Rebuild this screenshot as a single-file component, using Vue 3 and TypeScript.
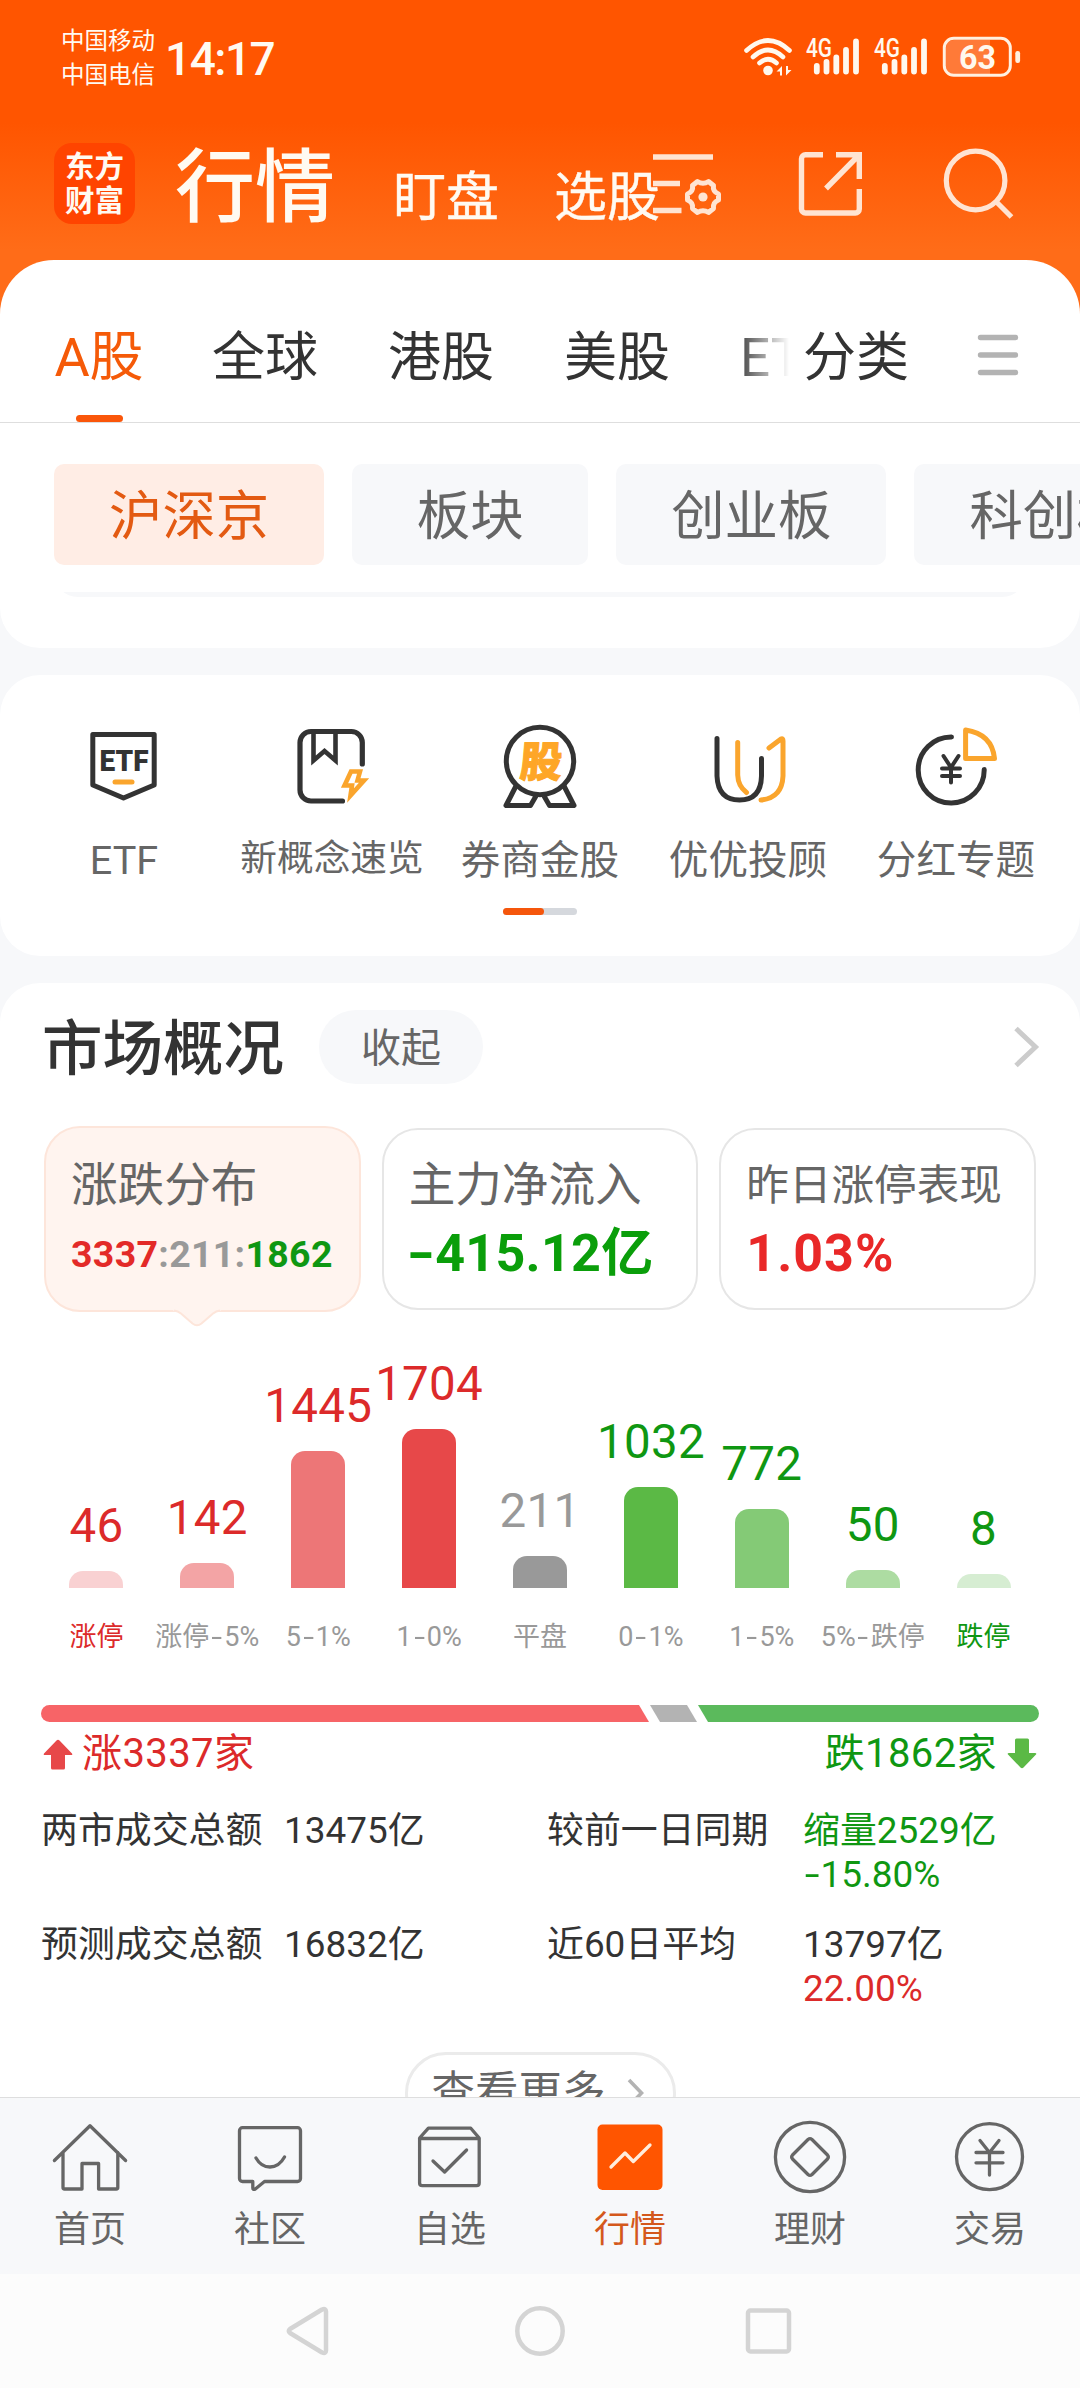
<script setup lang="ts">
interface Tab { label: string; active?: boolean }
interface Bar { value: number; label: string; height: number; bar: string; tone: string; labelTone: string }

const marketTabs: Tab[] = [
  { label: 'A股', active: true },
  { label: '全球' },
  { label: '港股' },
  { label: '美股' },
  { label: 'ETF' },
]

const chips: Tab[] = [
  { label: '沪深京', active: true },
  { label: '板块' },
  { label: '创业板' },
  { label: '科创板' },
]

const bars: Bar[] = [
  { value: 46, label: '涨停', height: 17, bar: '#f9d1d2', tone: 'up', labelTone: 'up' },
  { value: 142, label: '涨停-5%', height: 25.5, bar: '#f3a4a5', tone: 'up', labelTone: 'flat' },
  { value: 1445, label: '5-1%', height: 137, bar: '#ed7677', tone: 'up', labelTone: 'flat' },
  { value: 1704, label: '1-0%', height: 159, bar: '#e74849', tone: 'up', labelTone: 'flat' },
  { value: 211, label: '平盘', height: 32, bar: '#999999', tone: 'flat', labelTone: 'flat' },
  { value: 1032, label: '0-1%', height: 101.5, bar: '#5bb945', tone: 'down', labelTone: 'flat' },
  { value: 772, label: '1-5%', height: 79.5, bar: '#84ca76', tone: 'down', labelTone: 'flat' },
  { value: 50, label: '5%-跌停', height: 18, bar: '#addca2', tone: 'down', labelTone: 'flat' },
  { value: 8, label: '跌停', height: 14.5, bar: '#d6edd2', tone: 'down', labelTone: 'down' },
]
</script>

<template>
  <div class="screen">
    <header class="top">
      <div class="status">
        <div class="carriers"><span>中国移动</span><span>中国电信</span></div>
        <div class="clock">14:17</div>
        <svg class="wifi" width="50" height="40" viewBox="0 0 50 40" fill="none" stroke="#fff8ee" stroke-linecap="round">
          <path d="M3.500 13.500Q25 -6.500 46.500 13.500" stroke-width="4.600" />
          <path d="M10 20Q25 6 40 20" stroke-width="4.600" />
          <path d="M16.500 26Q25 18.500 33.500 26" stroke-width="4.600" />
          <circle cx="25" cy="33.500" r="4.800" fill="#fff8ee" stroke="none" />
          <path d="M33.500 34.500l5.500-5.500v9.500h-2v-4zM48.500 33l-5.500 5.500v-9.500h2v4z" fill="#fff8ee" stroke="none" />
        </svg>
        <svg v-for="n in 2" :key="n" class="signal" width="54" height="40" viewBox="0 0 54 40">
          <text x="0" y="20" font-size="25" font-weight="500" textLength="26" lengthAdjust="spacingAndGlyphs" fill="#fff8ee">4G</text>
          <g stroke="#fff8ee" stroke-width="5.800" stroke-linecap="round">
            <path d="M10.800 29v5.500M20.500 25v9.500M30.300 20.500v14M40 13v21.500M50 4.500v30" />
          </g>
        </svg>
        <svg class="battery" width="80" height="42" viewBox="0 0 80 42">
          <path d="M12 4H48V38H12a8 8 0 0 1-8-8V12a8 8 0 0 1 8-8z" fill="#fff" opacity=".22" />
          <rect x="2.300" y="2.300" width="66" height="37" rx="9.500" fill="none" stroke="#fff0e0" stroke-width="3" />
          <rect x="73.300" y="15" width="4.800" height="12" rx="2.200" fill="#fff0e0" />
          <text x="35.500" y="33" font-size="34" font-weight="700" text-anchor="middle" fill="#fff8ee" textLength="37" lengthAdjust="spacingAndGlyphs">63</text>
        </svg>
      </div>
      <div class="titlebar">
        <div class="logo"><span>东方</span><span>财富</span></div>
        <span class="t-main">行情</span>
        <span class="t-sub">盯盘</span>
        <span class="t-sub second">选股</span>
        <svg class="i-list" width="64" height="76" viewBox="0 0 64 76" fill="none" stroke="#ffe4d2" stroke-width="5.400">
          <path d="M0 15h60M0 41.500h27M0 68.500h28.500" />
          <path stroke-linejoin="round" stroke-width="5" d="M44.500 39.500Q50 43 55.500 39.500L60.500 43.500Q59.500 49.500 65.500 52V58Q59.500 60.500 60.500 66.500L55.500 70.500Q50 67 44.500 70.500L39.500 66.500Q40.500 60.500 34.500 58V52Q40.500 49.500 39.500 43.500Z" />
          <circle cx="50" cy="55" r="4.600" fill="#ffe4d2" stroke="none" />
        </svg>
        <svg class="i-share" width="68" height="68" viewBox="0 0 68 68" fill="none" stroke="#ffe4d2" stroke-width="5.400">
          <path d="M26 4.700H8.500a4 4 0 0 0-4 4V59a4 4 0 0 0 4 4H58.300a4 4 0 0 0 4-4V39" />
          <path d="M39 4.700H62.300V29M62 5L29 38.500" />
        </svg>
        <svg class="i-search" width="74" height="74" viewBox="0 0 74 74" fill="none" stroke="#ffe4d2" stroke-width="5.200">
          <circle cx="34.600" cy="34.500" r="29.300" /><path d="M55 55.500L70.500 71" />
        </svg>
      </div>
    </header>

    <section class="card markets">
      <nav class="tabs">
        <div class="tab-scroll">
          <div v-for="t in marketTabs" :key="t.label" class="tab" :class="{ on: t.active }">
            <span>{{ t.label }}</span><i></i>
          </div>
        </div>
        <div class="tab sort"><span>分类</span></div>
        <svg class="burger" width="42" height="42" viewBox="0 0 42 42" stroke="#b3b3b3" stroke-width="5.400" stroke-linecap="round">
          <path d="M3.500 3.500h35M3.500 21h35M3.500 38.500h35" />
        </svg>
      </nav>
      <div class="chips">
        <span v-for="c in chips" :key="c.label" class="chip" :class="{ on: c.active }">{{ c.label }}</span>
      </div>
      <div class="peek"><div></div></div>
    </section>

    <section class="card tools">
      <div class="tool-row">
        <div class="tool">
          <svg viewBox="0 0 96 96" fill="none" stroke="#333" stroke-width="5" stroke-linejoin="round" stroke-linecap="round">
            <path d="M16.800 18.500H78.200V69L47.500 82L16.800 69Z" />
            <text x="23.500" y="54.500" font-size="30" font-weight="900" fill="#333" stroke="none" textLength="49" lengthAdjust="spacingAndGlyphs">ETF</text>
            <path d="M39 66H56" stroke="#faa52d" />
          </svg>
          <span>ETF</span>
        </div>
        <div class="tool">
          <svg viewBox="0 0 96 96" fill="none" stroke="#333" stroke-width="5.200" stroke-linecap="round">
            <path d="M78.300 48V26.500a11 11 0 0 0-11-11H27a11 11 0 0 0-11 11V74a11 11 0 0 0 11 11H58.500" />
            <path d="M29.500 17V44.500L40.500 35L51.500 44.500V17" stroke-width="4.600" />
            <path d="M67 55.500H76L73.500 64.500H80L66.500 79.500L68 69.500H60.500Z" stroke="#faa52d" stroke-width="4.600" stroke-linecap="butt" />
          </svg>
          <span class="small">新概念速览</span>
        </div>
        <div class="tool">
          <svg viewBox="0 0 96 96" fill="none" stroke="#333" stroke-width="5" stroke-linejoin="round">
            <circle cx="48" cy="45" r="33.700" />
            <path d="M24 70L14 89.500H38.500L44 80M72 70L82 89.500H57.500L52 80" />
            <text x="0" y="0" transform="translate(48 60.500) skewX(-5)" text-anchor="middle" font-size="42" font-weight="900" fill="#fea627" stroke="#fea627" stroke-width="1">股</text>
          </svg>
          <span>券商金股</span>
        </div>
        <div class="tool">
          <svg viewBox="0 0 96 96" fill="none" stroke="#333" stroke-width="5" stroke-linecap="round" stroke-linejoin="round">
            <path d="M37.700 26.500V59Q38 70 46.500 76.500" stroke="#faa52d" />
            <path d="M69 32L81 23Q83 22 83 25V60Q82 82 61 84" stroke="#faa52d" />
            <path d="M17 22.500V60Q18 84 39.500 84Q61 84 61.500 60V42.500" />
          </svg>
          <span>优优投顾</span>
        </div>
        <div class="tool">
          <svg viewBox="0 0 96 96" fill="none" stroke="#333" stroke-width="5" stroke-linecap="round" stroke-linejoin="round">
            <path d="M43.500 21A33 33 0 1 0 76.200 53.500" />
            <path d="M35.500 40L43 51.500L50.500 40M43 51.500V66.500M34 52.500H52M34 60H52" stroke-width="4" />
            <path d="M57.600 14V42.500H86.500Q84 18 57.600 14Z" stroke="#faa52d" />
          </svg>
          <span>分红专题</span>
        </div>
      </div>
      <div class="pager"><i></i></div>
    </section>

    <section class="card overview">
      <div class="ov-head">
        <h2>市场概况</h2>
        <span class="fold">收起</span>
        <svg width="28" height="44" viewBox="0 0 28 44" fill="none" stroke="#ccc" stroke-width="5"><path d="M3 3.500L22.500 22L3 40.500" /></svg>
      </div>

      <div class="stats">
        <div class="stat on">
          <span class="s-name">涨跌分布</span>
          <span class="s-val ratio"><b class="up">3337</b><b class="flat">:211:</b><b class="down">1862</b></span>
          <svg class="pointer" width="48" height="20" viewBox="0 0 48 20"><path d="M0 0H48V1.500Q43 2 40 4.500L28.500 14.500Q24 18 19.500 14.500L8 4.500Q5 2 0 1.500Z" fill="#fff4ef" /><path d="M1 1.500Q5 2 8 4.500L19.500 14.500Q24 18 28.500 14.500L40 4.500Q43 2 47 1.500" fill="none" stroke="#fde5da" stroke-width="2" /></svg>
        </div>
        <div class="stat">
          <span class="s-name">主力净流入</span>
          <span class="s-val down"><i class="minus">-</i>415.12亿</span>
        </div>
        <div class="stat">
          <span class="s-name tight">昨日涨停表现</span>
          <span class="s-val up">1.03%</span>
        </div>
      </div>

      <div class="chart">
        <div v-for="b in bars" :key="b.label" class="col">
          <span class="num" :class="b.tone">{{ b.value }}</span>
          <div class="bar" :style="{ height: b.height + 'px', background: b.bar }"></div>
          <span class="lab" :class="b.labelTone"><template v-for="(part, k) in b.label.split('-')" :key="k"><i v-if="k" class="minus">-</i>{{ part }}</template></span>
        </div>
      </div>

      <div class="balance"><i class="b-up"></i><i class="b-flat"></i><i class="b-down"></i></div>
      <div class="legend">
        <svg width="30" height="31" viewBox="0 0 30 31"><path d="M13.500 1.500Q15 0 16.500 1.500L29 14.500Q30 16 28 16H22V29Q22 30.500 20.500 30.500H9.500Q8 30.500 8 29V16H2Q0 16 1 14.500Z" fill="#e74849" /></svg>
        <span class="up">涨3337家</span>
        <span class="down right">跌1862家</span>
        <svg class="dn" width="30" height="31" viewBox="0 0 30 31"><path d="M13.500 29.500Q15 31 16.500 29.500L29 16.500Q30 15 28 15H22V2Q22 .5 20.500 .5H9.500Q8 .5 8 2V15H2Q0 15 1 16.500Z" fill="#5bb945" /></svg>
      </div>

      <div class="totals">
        <span>两市成交总额</span><span>13475亿</span><span>较前一日同期</span>
        <span class="down">缩量2529亿<br /><i class="minus">-</i>15.80%</span>
        <span>预测成交总额</span><span>16832亿</span><span>近60日平均</span>
        <span>13797亿<br /><em class="up">22.00%</em></span>
      </div>

      <div class="more">
        <span>查看更多</span>
        <svg width="18" height="30" viewBox="0 0 18 30" fill="none" stroke="#b3b3b3" stroke-width="3.600"><path d="M2 2L14.500 15L2 28" /></svg>
      </div>
    </section>

    <nav class="tabbar">
      <div class="item">
        <svg viewBox="0 0 80 80"><path d="M4.400 43.500L40 8.800L75.600 43.500M13 35.500V70.500Q13 72 14.500 72H32V46.500H48.600V72H66.300Q67.800 72 67.800 70.500V35.500" /></svg>
        <span>首页</span>
      </div>
      <div class="item">
        <svg viewBox="0 0 80 80"><path d="M22.800 64.500H12.500a3 3 0 0 1-3-3V13.700a3 3 0 0 1 3-3H67.500a3 3 0 0 1 3 3V61.500a3 3 0 0 1-3 3H34.500L25 72.200Q22.800 73 22.800 71Z" /><path d="M26 41Q31 50 40 50T54.500 40" /></svg>
        <span>社区</span>
      </div>
      <div class="item">
        <svg viewBox="0 0 80 80"><path d="M9.600 21.500H69.200V66Q69.200 68.700 66.500 68.700H12.300Q9.600 68.700 9.600 66ZM9.600 21L18.400 11.200H60.800L69.200 21M23 44L34.600 55L56.600 33" /></svg>
        <span>自选</span>
      </div>
      <div class="item on">
        <svg viewBox="0 0 80 80"><rect x="7.500" y="7.500" width="65" height="65.500" rx="5" fill="#ff5500" stroke="none" /><path d="M21 50L35 36L43.300 44.500L60 28" stroke="#ffeddc" /></svg>
        <span>行情</span>
      </div>
      <div class="item">
        <svg viewBox="0 0 80 80"><circle cx="40" cy="40" r="34.600" /><path d="M38 22.500Q40 20.800 42 22.500L57.500 38Q59.200 40 57.500 42L42 57.500Q40 59.300 38 57.500L22.500 42Q20.800 40 22.500 38Z" /></svg>
        <span>理财</span>
      </div>
      <div class="item">
        <svg viewBox="0 0 80 80"><circle cx="39.500" cy="39.700" r="33" /><path d="M30 23.500L39.500 35.500L49 23.500M39.500 35V58M26 35.500H53M26 45.800H53" /></svg>
        <span>交易</span>
      </div>
    </nav>

    <footer class="sysnav">
      <svg viewBox="0 0 60 60"><path d="M11 28Q8.500 30 11 32L43 51.500Q47 53 47 49.500V10.500Q47 7 43 8.500Z" /></svg>
      <svg viewBox="0 0 60 60"><circle cx="30" cy="30" r="22.700" /></svg>
      <svg viewBox="0 0 60 60"><rect x="7" y="9.500" width="41" height="41" rx="2.500" /></svg>
    </footer>
  </div>
</template>

<style>
body { margin: 0; }
</style>

<style scoped>
.screen {
  width: 1080px; height: 2388px; overflow: hidden; background: #f7f8fa;
  display: flex; flex-direction: column; color: #333; white-space: nowrap;
  font-family: Roboto, "Noto Sans CJK SC", sans-serif;
}
.screen svg { display: block; flex: none; overflow: visible; }
i, em { font-style: normal; }
.up { color: #dc2a2a; }
.down { color: #0f9712; }
.flat { color: #999; }
.minus { display: inline-block; transform: scaleX(1.45); margin: 0 .1em; }
.lab .minus { margin: 0 .14em; }
.s-val .minus { margin: 0 .06em 0 .05em; }

.top { height: 320px; flex: none; background: linear-gradient(#ff5500 0, #ff5500 122px, #ff6c18 250px, #ff6c18 100%); color: #fffaf2; }
.status { height: 120px; display: flex; align-items: flex-start; padding-left: 61px; }
.carriers { display: flex; flex-direction: column; font-size: 23.5px; line-height: 34px; padding-top: 24px; width: 104px; }
.clock { font-size: 46px; font-weight: 500; line-height: 60px; padding-top: 29px; width: 578px; letter-spacing: -1.500px; }
.wifi { margin-top: 37px; }
.signal { margin: 37px 0 0 13px; }
.signal + .signal { margin-left: 14px; }
.battery { margin: 36px 0 0 14px; }
.titlebar { height: 140px; display: flex; align-items: flex-start; padding-left: 54px; }
.logo {
  width: 81px; height: 81px; margin-top: 23px; border-radius: 18px; background: #ff4400;
  display: flex; flex-direction: column; align-items: center; justify-content: center;
  font-size: 29.5px; font-weight: 700; line-height: 34px;
}
.t-main { font-size: 80px; font-weight: 500; line-height: 80px; margin: 28px 0 0 40px; }
.t-sub { font-size: 53px; font-weight: 400; line-height: 60px; margin: 48px 0 0 58px; -webkit-text-stroke: .4px; }
.t-sub.second { margin-left: 55px; }
.i-list { margin: 22px 0 0 -7px; }
.i-share { margin: 30px 0 0 80px; }
.i-search { margin: 26px 0 0 76px; }

.card { background: #fff; border-radius: 40px; flex: none; }
.markets { margin-top: -60px; height: 388px; border-radius: 54px 54px 40px 40px; overflow: hidden; }
.tabs { height: 162px; border-bottom: 1px solid #dedede; display: flex; }
.tab-scroll {
  width: 736px; padding-left: 54px; display: flex; gap: 70px; overflow: hidden;
  -webkit-mask-image: linear-gradient(90deg, #000 735px, transparent 789px); mask-image: linear-gradient(90deg, #000 735px, transparent 789px);
}
.tab { flex: none; display: flex; flex-direction: column; align-items: center; justify-content: space-between; font-size: 53px; }
.tab span { line-height: 60px; margin-top: 68px; }
.tab.on { color: #f55a08; font-size: 54px; width: 90px; margin-right: -2px; }
.tab.on i { width: 47px; height: 7px; border-radius: 4px; background: #fa560a; }
.sort { margin-left: 13px; }
.burger { margin: 74px 0 0 68px; }
.chips { display: flex; gap: 28px; padding: 41px 0 0 54px; }
.chip {
  flex: none; box-sizing: border-box; min-width: 236px; height: 101px; padding: 0 55px; border-radius: 10px;
  background: #f7f8fa; color: #666; font-size: 53.4px; line-height: 106px; text-align: center;
}
.chip.on { background: #ffede5; color: #e35a12; }
.peek { margin: 27px 54px 0; height: 5px; display: flex; align-items: flex-end; overflow: hidden; }
.peek div { flex: 1; height: 50px; border-radius: 24px; background: #f7f8fa; }

.tools { margin-top: 27px; height: 281px; }
.tool-row { display: flex; padding: 41px 20px 0; height: 175px; }
.tool { width: 208px; display: flex; flex-direction: column; align-items: center; }
.tool svg { width: 96px; height: 96px; }
.tool span { font-size: 39.600px; line-height: 60px; margin-top: 19px; color: #666; }
.tool .small { font-size: 36.700px; margin-top: 17px; }
.pager { margin: 17px auto 0; width: 74px; height: 7px; border-radius: 4px; background: #d5d8dd; }
.pager i { display: block; width: 41px; height: 7px; border-radius: 4px; background: #f5560c; }

.overview { margin-top: 27px; height: 1114px; border-radius: 40px 40px 0 0; overflow: hidden; }
.ov-head { height: 128px; display: flex; align-items: center; padding-left: 42px; }
h2 { margin: 5px 0 0; font-size: 60.500px; font-weight: 500; line-height: 70px; width: 277px; }
.fold { width: 164px; height: 74px; border-radius: 37px; background: #f7f8fa; color: #666; font-size: 40px; line-height: 78px; text-align: center; }
.ov-head svg { margin-left: 530px; }
.stats { display: flex; gap: 21px; padding: 17px 44px 0; height: 182px; }
.stat {
  flex: 1; box-sizing: border-box; height: 182px; border: 2px solid #e6e6e6; border-radius: 36px; padding: 25px 0 0 25px;
  display: flex; flex-direction: column; position: relative;
}
.stat.on { margin: -2px 0 0; height: 186px; padding-top: 27px; background: #fff4ef; border-color: #fde5da; }
.s-name { font-size: 46.600px; line-height: 60px; color: #666; }
.s-name.tight { font-size: 42.600px; }
.s-val { font-size: 52px; font-weight: 700; line-height: 62px; margin-top: 8px; letter-spacing: .3px; }
.s-val.up { letter-spacing: 1px; color: #e92828; }
.s-val.ratio { font-size: 37.500px; letter-spacing: .300px; }
.s-val b { font-weight: 700; }
.s-val b.up { color: #e32a28; }
.s-val.down { color: #0a9e0a; }
.pointer { position: absolute; left: 127px; bottom: -19px; }

.chart { height: 347px; padding: 0 41px; display: flex; }
.col { width: 110.900px; display: flex; flex-direction: column; align-items: center; justify-content: flex-end; }
.num { font-size: 47.500px; line-height: 50px; letter-spacing: .3px; margin-bottom: 20px; }
.bar { width: 54px; border-radius: 14px 14px 0 0; flex: none; }
.lab { font-size: 27px; line-height: 40px; margin-top: 29px; }

.balance { margin: 48px 41px 0; height: 17px; border-radius: 9px; overflow: hidden; display: flex; }
.balance i { height: 17px; }
.b-up { width: 608px; background: #f76467; clip-path: polygon(0 0, 598px 0, 100% 100%, 0 100%); }
.b-flat { width: 47px; margin-left: 1px; background: #b3b3b3; clip-path: polygon(0 0, 37px 0, 100% 100%, 10px 100%); }
.b-down { flex: 1; margin-left: 1px; background: #5bba5c; clip-path: polygon(0 0, 100% 0, 100% 100%, 10px 100%); }
.legend { display: flex; padding: 0 43px; height: 60px; font-size: 40px; line-height: 64px; letter-spacing: .4px; }
.legend svg { margin-top: 17px; }
.legend span { margin-left: 9px; }
.legend .right { margin: 0 10px 0 auto; }
.legend svg.dn { margin-top: 16px; }
.totals { display: grid; grid-template-columns: 243px 263px 256px 1fr; grid-auto-rows: 114px; padding: 27px 0 0 41px; font-size: 36.900px; line-height: 43.500px; }
.more {
  width: 271px; height: 82px; box-sizing: border-box; margin: 15px auto 0; border: 3px solid #ebebeb; border-radius: 41px;
  display: flex; align-items: center; padding-left: 24px; color: #666; font-size: 43.500px; line-height: 60px;
}
.more svg { margin-left: 21px; }

.tabbar { height: 176px; flex: none; border-top: 1px solid #dedede; background: #f7f8fa; display: flex; position: relative; }
.item { width: 180px; display: flex; flex-direction: column; align-items: center; padding-top: 19px; }
.item svg { width: 80px; height: 80px; fill: none; stroke: #666; stroke-width: 3.300; stroke-linecap: round; stroke-linejoin: round; }
.item span { font-size: 36px; line-height: 50px; margin-top: 8px; color: #666; }
.item.on span { color: #d4581c; }
.sysnav { height: 114px; flex: none; background: #fcfcfc; display: flex; justify-content: center; align-items: center; gap: 171px; }
.sysnav svg { width: 60px; height: 60px; fill: none; stroke: #d4d4d4; stroke-width: 4.500; stroke-linejoin: round; }
</style>
